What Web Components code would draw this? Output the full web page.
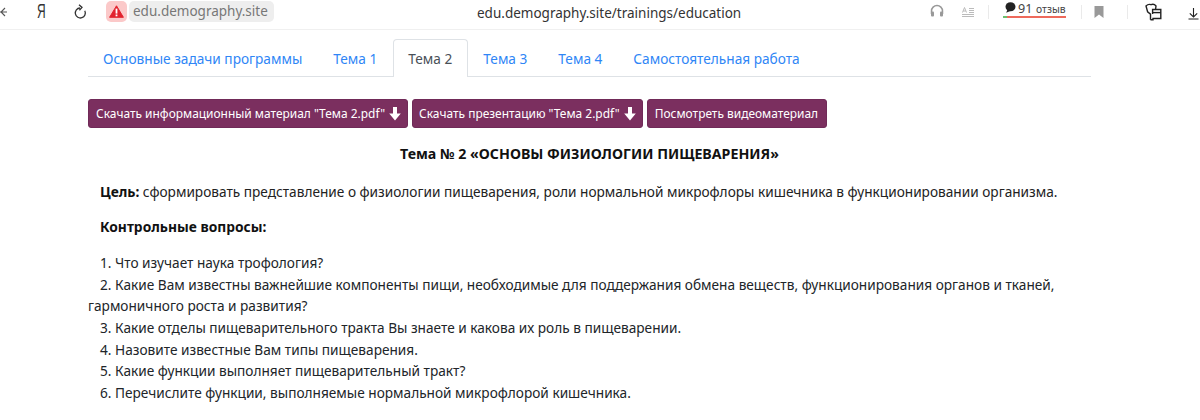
<!DOCTYPE html>
<html lang="ru"><head><meta charset="utf-8"><title>edu.demography.site</title>
<style>
html,body{margin:0;padding:0;background:#fff;height:420px;overflow:hidden}
body{font-family:"Noto Sans","Open Sans",sans-serif;color:#212529}
</style></head><body>
<browser-bar></browser-bar>
<page-content>
<topic-tabs></topic-tabs>
<action-buttons></action-buttons>
<lesson-body></lesson-body>
</page-content>
<script>
function def(name,html){customElements.define(name,class extends HTMLElement{constructor(){super();this.attachShadow({mode:'open'}).innerHTML=html}})}
def('browser-bar',`<style>
:host{display:block;height:29px;border-bottom:1px solid #f0f0f0;position:relative;font-family:"Noto Sans",sans-serif}
.left{display:flex;align-items:center;height:23px}
.back{width:8px;height:23px;flex:none}
.ya{display:block;font-size:20px;color:#333;margin-left:29px;width:8px;line-height:23px;font-family:"Liberation Sans",sans-serif;transform:scaleX(.6);transform-origin:left center}
.rel{margin-left:27px;width:16px;height:16px;flex:none}
.warn{margin-left:18px;width:21px;height:21px;background:#fbc9c9;border-radius:5px;display:flex;align-items:center;justify-content:center;flex:none}
.host{margin-left:2px;height:21px;background:#eee;border-radius:5px;padding:0 6px 0 4px;font-size:13.5px;line-height:21px;color:#777}
.url{position:absolute;left:477px;top:3px;font-size:13.5px;line-height:20px;color:#333}
.r{position:absolute;top:0;right:0;height:29px;width:300px}
.r>*{position:absolute}
.sep{width:1px;height:14px;top:5px;background:#eaeaea}
.rev{top:1px;font-size:10.3px;line-height:15px;color:#444;white-space:nowrap}
.rev b{font-weight:400;font-size:12.6px;margin-right:1px}
.bar{left:103px;top:16px;width:63px;height:2px;background:#ee6a5c}
.bar i{display:block;width:4px;height:2px;background:#6cc070}
</style>
<div class="left">
<svg class="back" viewBox="0 0 8 23" fill="none" stroke="#555" stroke-width="1.1"><path d="M-3 12H7M-1 8l4 4-4 4" transform="matrix(-1 0 0 1 4 0)"/></svg>
<span class="ya">Я</span>
<svg class="rel" viewBox="0 0 16 16" fill="none" stroke="#333" stroke-width="1.3"><path d="M12.8 6.8A5 5 0 1 1 8 4"/><path d="M7 .8l3 2.6-2.6 2.8"/></svg>
<span class="warn"><svg width="15" height="13" viewBox="0 0 15 13"><path d="M7.5 .8 14.4 12.3H.6z" fill="#e2232e" stroke="#e2232e" stroke-linejoin="round"/><rect x="6.6" y="3.6" width="1.8" height="5" fill="#fff"/><rect x="6.6" y="9.5" width="1.8" height="1.8" fill="#fff"/></svg></span>
<span class="host">edu.demography.site</span>
</div>
<span class="url">edu.demography.site/trainings/education</span>
<div class="r">
<svg style="left:30px;top:4px" width="14" height="14" viewBox="0 0 14 14" fill="none"><path d="M1.5 10V7a5.5 5.5 0 0 1 11 0v3" stroke="#999" stroke-width="1.5"/><rect x="1" y="7.5" width="3" height="5" rx="1" fill="#999"/><rect x="10" y="7.5" width="3" height="5" rx="1" fill="#999"/></svg>
<svg style="left:62px;top:6px" width="12" height="12" viewBox="0 0 12 12" fill="none" stroke="#bbb"><path d="M0 10.5h12M0 8.5h12M7 6.5h5M7 4.5h5M7 2.5h5M.5 6.5l2-5 2 5M1.2 5h2.6"/></svg>
<span class="sep" style="left:88px"></span>
<svg style="left:105px;top:2px" width="11" height="11" viewBox="0 0 11 11"><ellipse cx="5.5" cy="4.7" rx="5" ry="4.5" fill="#222"/><path d="M2.5 7.5 1.2 10.8 6 8.8z" fill="#222"/></svg>
<span class="rev" style="left:118px"><b>91</b> отзыв</span>
<span class="bar"><i></i></span>
<span class="sep" style="left:181px"></span>
<svg style="left:194px;top:6px" width="10" height="12" viewBox="0 0 10 12"><path d="M.5 0h9v12L5 8.6.5 12z" fill="#999"/></svg>
<span class="sep" style="left:227px"></span>
<svg style="left:245px;top:3px" width="17" height="18" viewBox="0 0 17 18" fill="none" stroke="#222" stroke-width="1.4"><path d="M5.5 16.8V11.2L2.6 8.8 1 3C3 1 5 1.3 6 1.7 7.6 1 9.6 1.2 11 3L10.6 6"/><path d="M5.5 16.8H8V15.5H15.8V6.5H7.6V11"/><path d="M8 9.6H15.8"/></svg>
<svg style="left:288px;top:7px" width="11" height="13" viewBox="0 0 11 13" fill="none" stroke="#222" stroke-width="1.1"><path d="M5.5 1v9M1.8 6.4 5.5 10l3.7-3.6M.5 12h10"/></svg>
</div>`);
def('page-content',`<style>
:host{display:block;margin-left:88px;width:1003px;padding-top:9px}
</style><slot></slot>`);
def('topic-tabs',`<style>
:host{display:flex;height:38px;box-sizing:border-box;border-bottom:1px solid #dee2e6;font-size:13.67px;line-height:21.6px}
a{display:block;padding:8px 15px 8px 14px;height:37px;box-sizing:border-box;color:#2f86f6;text-decoration:none;white-space:nowrap;border:1px solid transparent;border-bottom:0}
a.on{color:#495057;background:#fff;border-color:#dee2e6;border-radius:4px 4px 0 0;height:38px}
</style>
<a href="#">Основные задачи программы</a><a href="#">Тема 1</a><a href="#" class="on">Тема 2</a><a href="#">Тема 3</a><a href="#">Тема 4</a><a href="#">Самостоятельная работа</a>`);
const arrow=`<svg width="12" height="14" viewBox="0 0 12 14" style="margin-left:4px;flex:none"><path d="M4 0h4v6.6h3.8L6 13.6.2 6.6H4z" fill="#fff"/></svg>`;
def('action-buttons',`<style>
:host{display:flex;gap:4px;margin-top:22px;height:29px}
a{display:flex;align-items:center;height:29px;box-sizing:border-box;padding:0 6px 0 7px;background:#7b2f5f;border:1px solid #702a58;border-radius:3px;color:#fff;font-size:11.95px;text-decoration:none;white-space:nowrap}
a.b{padding-left:6px}
a.c{padding-right:8px}
</style>
<a href="#">Скачать информационный материал "Тема 2.pdf"${arrow}</a><a href="#" class="b">Скачать презентацию "Тема 2.pdf"${arrow}</a><a href="#" class="c">Посмотреть видеоматериал</a>`);
def('lesson-body',`<style>
:host{display:block;font-size:13.67px;line-height:21.6px;color:#212529}
h3{margin:15px 0 0;font-size:14.2px;line-height:21.6px;text-align:center;font-weight:700;color:#111}
p{margin:0;text-indent:12px;color:#222}
b{color:#111;font-size:13.8px}
.goal{margin-top:16px}
.q{margin-top:14px}
ol{list-style:none;margin:14.4px 0 0;padding:0}
li{text-indent:12px}
</style>
<h3>Тема № 2 «ОСНОВЫ ФИЗИОЛОГИИ ПИЩЕВАРЕНИЯ»</h3>
<p class="goal"><b>Цель:</b> сформировать представление о физиологии пищеварения, роли нормальной микрофлоры кишечника в функционировании организма.</p>
<p class="q"><b>Контрольные вопросы:</b></p>
<ol>
<li>1. Что изучает наука трофология?</li>
<li>2. Какие Вам известны важнейшие компоненты пищи, необходимые для поддержания обмена веществ, функционирования органов и тканей, гармоничного роста и развития?</li>
<li>3. Какие отделы пищеварительного тракта Вы знаете и какова их роль в пищеварении.</li>
<li>4. Назовите известные Вам типы пищеварения.</li>
<li>5. Какие функции выполняет пищеварительный тракт?</li>
<li>6. Перечислите функции, выполняемые нормальной микрофлорой кишечника.</li>
</ol>`);
</script>
</body></html>
